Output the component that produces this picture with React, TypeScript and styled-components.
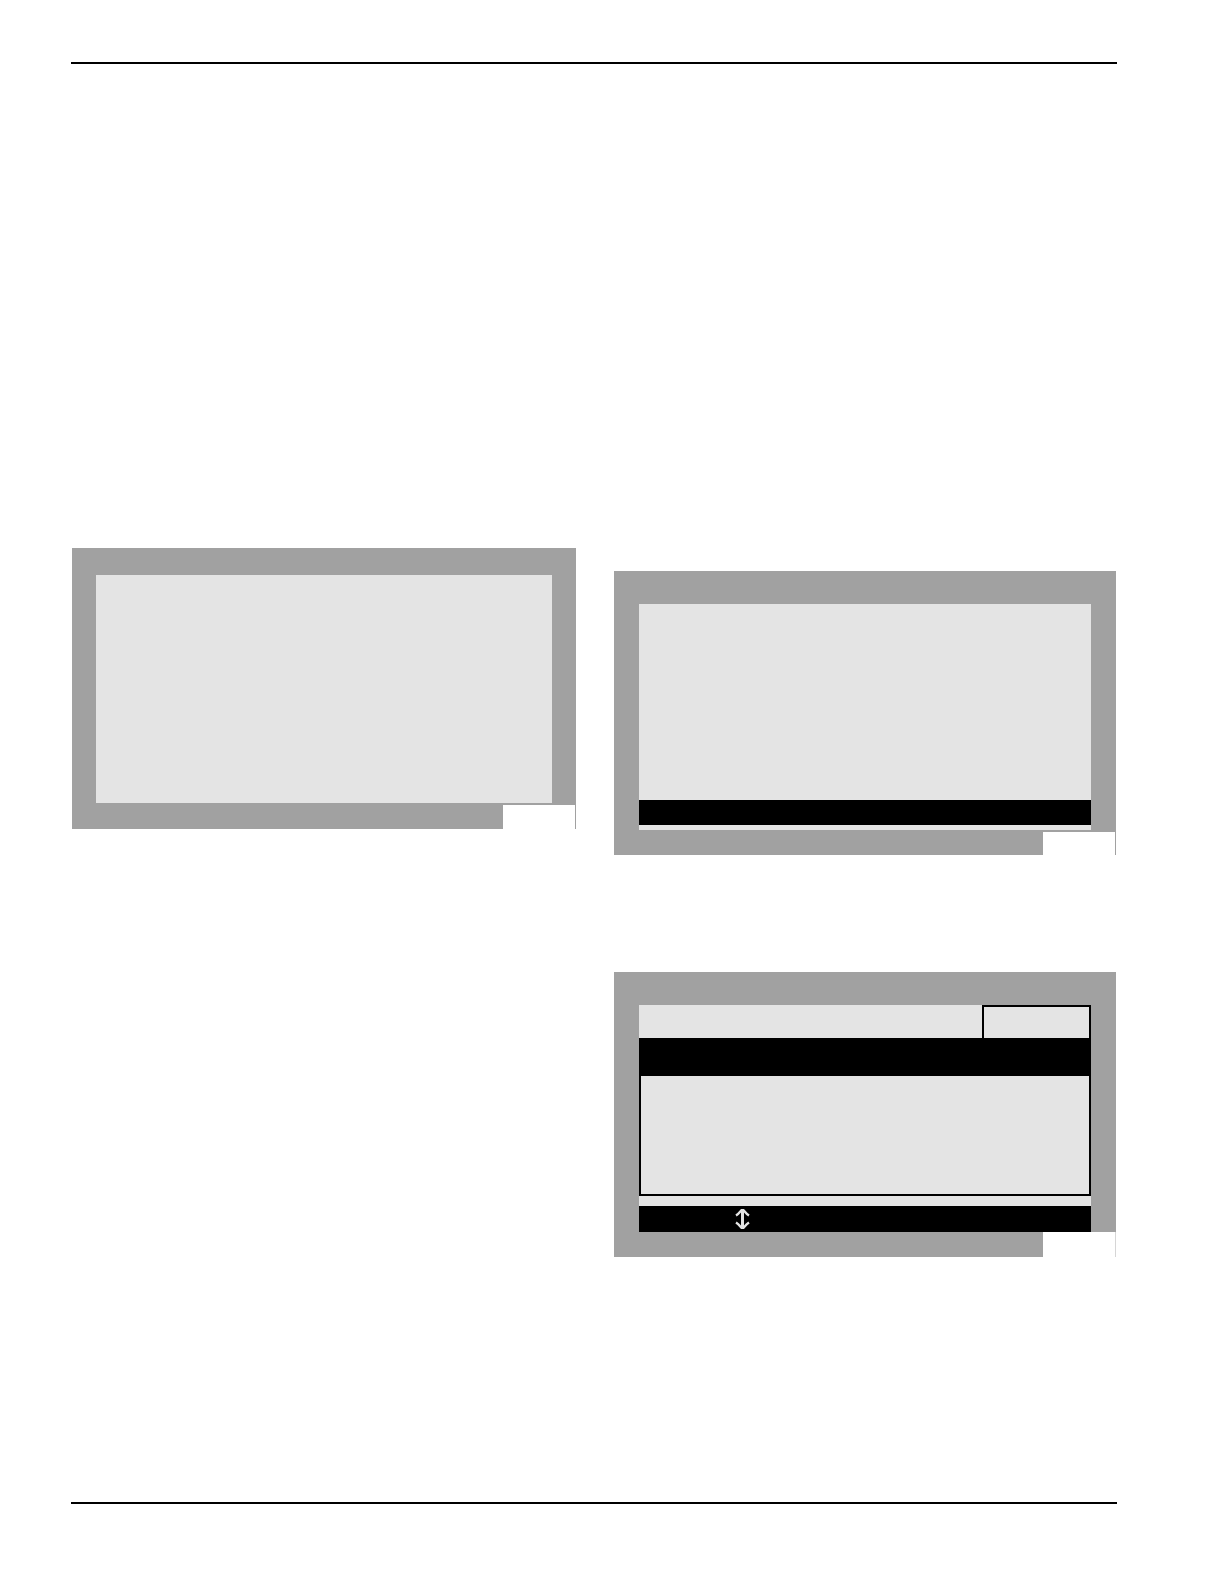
import React from "react";
import styled, { createGlobalStyle } from "styled-components";

const color = {
  bezel: "#a1a1a1",
  screen: "#e4e4e4",
  ink: "#000000",
  paper: "#ffffff",
};

const GlobalStyle = createGlobalStyle`
  *, *::before, *::after { box-sizing: border-box; }
  body {
    margin: 0;
    background: ${color.paper};
    font-family: "Liberation Sans", Arial, sans-serif;
  }
`;

const Page = styled.main`
  display: flex;
  flex-direction: column;
  padding: 62px 107px 80px 71px;
`;

const Rule = styled.hr`
  width: 100%;
  height: 2px;
  margin: 0;
  border: 0;
  background: ${color.ink};
`;

const Columns = styled.div`
  display: grid;
  grid-template-columns: 504fr 502fr;
  column-gap: 38px;
  padding: 484px 1px 245px;
`;

const Column = styled.section<{ $top?: number }>`
  display: flex;
  flex-direction: column;
  gap: 117px;
  padding-top: ${({ $top = 0 }) => $top}px;
`;

const Panel = styled.figure<{ $top: number; $side: number }>`
  display: flex;
  flex-direction: column;
  margin: 0;
  padding-top: ${({ $top }) => $top}px;
  background: ${color.bezel};

  & > :first-child {
    margin: 0 ${({ $side }) => $side}px;
  }
`;

const Screen = styled.div<{ $height: number }>`
  display: flex;
  flex-direction: column;
  min-height: ${({ $height }) => $height}px;
  background: ${color.screen};
`;

const PanelFooter = styled.div<{ $gap?: number; $height: number }>`
  display: flex;
  justify-content: flex-end;
  height: ${({ $height }) => $height}px;
  margin-top: ${({ $gap = 0 }) => $gap}px;
`;

const FigureLabel = styled.figcaption<{ $edge?: string }>`
  width: 73px;
  background: ${color.paper};
  border-right: 1px solid ${({ $edge = color.bezel }) => $edge};
`;

const Blank = styled.div`
  flex: 1;
`;

const Bar = styled.div<{ $height: number }>`
  display: flex;
  align-items: center;
  height: ${({ $height }) => $height}px;
  background: ${color.ink};
`;

const StatusBar = styled(Bar)`
  padding-left: 96px;
`;

const Strip = styled.div<{ $height: number }>`
  height: ${({ $height }) => $height}px;
`;

const ScreenHeader = styled.div`
  display: flex;
  justify-content: flex-end;
  height: 33px;
`;

const HeaderTab = styled.div`
  width: 109px;
  border: 2px solid ${color.ink};
  border-bottom: 0;
`;

const ListBox = styled.div`
  height: 120px;
  border: 2px solid ${color.ink};
  border-top: 0;
`;

const ScrollIcon = () => (
  <svg width="15" height="20" viewBox="0 0 15 20" fill="none" stroke={color.screen} aria-hidden="true">
    <path d="M7.5 1V19" strokeWidth="3" />
    <path d="M1 6.5C3.5 5 5 3 6.5 1.2H8.5C10 3 11.5 5 14 6.5" strokeWidth="2.4" />
    <path d="M1 13.5C3.5 15 5 17 6.5 18.8H8.5C10 17 11.5 15 14 13.5" strokeWidth="2.4" />
  </svg>
);

export default function App() {
  return (
    <>
      <GlobalStyle />
      <Page>
        <Rule />
        <Columns>
          <Column>
            <Panel $top={27} $side={24}>
              <Screen $height={228} />
              <PanelFooter $gap={2} $height={24}>
                <FigureLabel />
              </PanelFooter>
            </Panel>
          </Column>
          <Column $top={23}>
            <Panel $top={33} $side={25}>
              <Screen $height={226}>
                <Blank />
                <Bar $height={25} />
                <Strip $height={5} />
              </Screen>
              <PanelFooter $gap={2} $height={23}>
                <FigureLabel />
              </PanelFooter>
            </Panel>
            <Panel $top={33} $side={25}>
              <Screen $height={227}>
                <ScreenHeader>
                  <HeaderTab />
                </ScreenHeader>
                <Bar $height={38} />
                <ListBox />
                <Strip $height={10} />
                <StatusBar $height={26}>
                  <ScrollIcon />
                </StatusBar>
              </Screen>
              <PanelFooter $height={25}>
                <FigureLabel $edge="#d6d6d6" />
              </PanelFooter>
            </Panel>
          </Column>
        </Columns>
        <Rule />
      </Page>
    </>
  );
}
